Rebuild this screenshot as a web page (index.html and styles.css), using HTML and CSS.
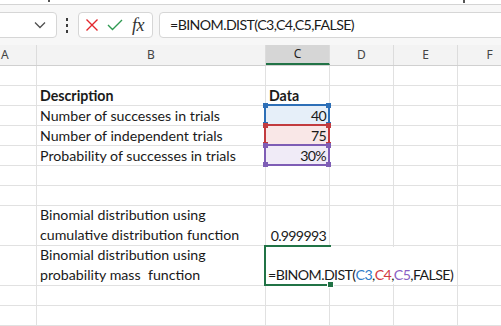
FILE: index.html
```html
<!DOCTYPE html>
<html lang="en">
<head>
    <meta charset="UTF-8">
    <title>BINOM.DIST</title>
    <link rel="stylesheet" href="styles.css">
</head>
<body>
    <div class="ribbon-edge">
        <span class="frag frag-left"></span>
        <span class="frag frag-right"></span>
    </div>

    <div class="formula-bar">
        <div class="name-box">
            <svg width="12" height="8" viewBox="0 0 12 8"><polyline points="1,1.5 6,6.5 11,1.5" fill="none" stroke="#505050" stroke-width="1.3"/></svg>
        </div>
        <div class="more-dots"><i></i><i></i><i></i></div>
        <div class="fx-buttons">
            <svg class="btn-cancel" width="14" height="14" viewBox="0 0 14 14"><path d="M1.5 1.5 L12.5 12.5 M12.5 1.5 L1.5 12.5" stroke="#e3262c" stroke-width="1.4" fill="none"/></svg>
            <svg class="btn-enter" width="16" height="12" viewBox="0 0 16 12"><polyline points="1,6 5.5,10.5 15,1" stroke="#2f9a52" stroke-width="1.4" fill="none"/></svg>
            <span class="fx">fx</span>
        </div>
        <div class="formula-input">=BINOM.DIST(C3,C4,C5,FALSE)</div>
    </div>

    <div class="sheet">
        <div class="col-headers">
            <div class="hdr col-a">A</div>
            <div class="hdr col-b">B</div>
            <div class="hdr col-c selected">C</div>
            <div class="hdr col-d">D</div>
            <div class="hdr col-e">E</div>
            <div class="hdr col-f">F</div>
        </div>

        <div class="grid">
            <div class="row">
                <div class="cell col-a"></div><div class="cell col-b"></div><div class="cell col-c"></div>
                <div class="cell col-d"></div><div class="cell col-e"></div><div class="cell col-f"></div>
            </div>
            <div class="row">
                <div class="cell col-a"></div><div class="cell col-b bold">Description</div><div class="cell col-c bold">Data</div>
                <div class="cell col-d"></div><div class="cell col-e"></div><div class="cell col-f"></div>
            </div>
            <div class="row">
                <div class="cell col-a"></div><div class="cell col-b">Number of successes in trials</div><div class="cell col-c num ref-blue">40</div>
                <div class="cell col-d"></div><div class="cell col-e"></div><div class="cell col-f"></div>
            </div>
            <div class="row">
                <div class="cell col-a"></div><div class="cell col-b">Number of independent trials</div><div class="cell col-c num ref-red">75</div>
                <div class="cell col-d"></div><div class="cell col-e"></div><div class="cell col-f"></div>
            </div>
            <div class="row">
                <div class="cell col-a"></div><div class="cell col-b">Probability of successes in trials</div><div class="cell col-c num ref-purple">30%</div>
                <div class="cell col-d"></div><div class="cell col-e"></div><div class="cell col-f"></div>
            </div>
            <div class="row">
                <div class="cell col-a"></div><div class="cell col-b"></div><div class="cell col-c"></div>
                <div class="cell col-d"></div><div class="cell col-e"></div><div class="cell col-f"></div>
            </div>
            <div class="row">
                <div class="cell col-a"></div><div class="cell col-b"></div><div class="cell col-c"></div>
                <div class="cell col-d"></div><div class="cell col-e"></div><div class="cell col-f"></div>
            </div>
            <div class="row tall">
                <div class="cell col-a"></div><div class="cell col-b wrap">Binomial distribution using<br>cumulative distribution function</div><div class="cell col-c num">0.999993</div>
                <div class="cell col-d"></div><div class="cell col-e"></div><div class="cell col-f"></div>
            </div>
            <div class="row tall">
                <div class="cell col-a"></div><div class="cell col-b wrap">Binomial distribution using<br>probability mass&nbsp; function</div><div class="cell col-c"></div>
                <div class="cell col-d"></div><div class="cell col-e"></div><div class="cell col-f"></div>
            </div>
            <div class="row">
                <div class="cell col-a"></div><div class="cell col-b"></div><div class="cell col-c"></div>
                <div class="cell col-d"></div><div class="cell col-e"></div><div class="cell col-f"></div>
            </div>
            <div class="row">
                <div class="cell col-a"></div><div class="cell col-b"></div><div class="cell col-c"></div>
                <div class="cell col-d"></div><div class="cell col-e"></div><div class="cell col-f"></div>
            </div>

            <!-- range highlights for the formula references -->
            <div class="range range-blue"><i class="h tl"></i><i class="h tr"></i><i class="h bl"></i><i class="h br"></i></div>
            <div class="range range-red"><i class="h tl"></i><i class="h tr"></i><i class="h bl"></i><i class="h br"></i></div>
            <div class="range range-purple"><i class="h tl"></i><i class="h tr"></i><i class="h bl"></i><i class="h br"></i></div>

            <!-- cell being edited -->
            <div class="editor">=BINOM.DIST(<span class="r-blue">C3</span>,<span class="r-red">C4</span>,<span class="r-purple">C5</span>,FALSE)</div>
            <div class="active-cell"><i class="fill-handle"></i></div>
        </div>
    </div>
</body>
</html>
```

FILE: styles.css
```css
body {
    margin: 0;
    width: 501px;
    height: 326px;
    overflow: hidden;
    background: #fff;
    font-family: Lato, "Liberation Sans", sans-serif;
    color: #1a1a1a;
}

.ribbon-edge {
    position: relative;
    height: 4px;
    border-bottom: 1px solid #d4d4d4;
    background: #fff;
}
.frag {
    position: absolute;
    top: 0;
    width: 2px;
    height: 2px;
    background: #555;
}
.frag-left { left: 48px; }
.frag-right { left: 463px; height: 3px; }

/* formula bar */
.formula-bar {
    display: flex;
    align-items: center;
    height: 40px;
    background: #f7f7f7;
    overflow: hidden;
}
.name-box {
    box-sizing: border-box;
    width: 64px;
    height: 26px;
    margin-left: -7px;
    background: #fff;
    border: 1px solid #d6d6d6;
    border-radius: 4px;
    display: flex;
    align-items: center;
    justify-content: flex-end;
    padding-right: 10px;
}
.more-dots {
    margin-left: 9px;
    display: flex;
    flex-direction: column;
    gap: 3px;
}
.more-dots i {
    display: block;
    width: 2px;
    height: 3px;
    background: #3c3c3c;
}
.fx-buttons {
    box-sizing: border-box;
    width: 75px;
    height: 26px;
    margin-left: 10px;
    background: #fff;
    border: 1px solid #d6d6d6;
    border-radius: 4px;
    display: flex;
    align-items: center;
    padding-left: 6px;
}
.btn-enter { margin-left: 8px; }
.fx {
    margin-left: 9px;
    font-family: "Liberation Serif", serif;
    font-style: italic;
    font-size: 18px;
    color: #333;
    letter-spacing: -0.5px;
}
.formula-input {
    box-sizing: border-box;
    flex: 1;
    height: 26px;
    margin-left: 6px;
    margin-right: -10px;
    background: #fff;
    border: 1px solid #d6d6d6;
    border-radius: 4px;
    padding-left: 10px;
    line-height: 24px;
    font-size: 14.2px;
    letter-spacing: -0.6px;
    color: #1a1a1a;
}

/* sheet */
.sheet {
    width: 522px;
}
.col-headers {
    display: flex;
    height: 21px;
    box-sizing: border-box;
    border-bottom: 1px solid #d0d0d0;
    background: #f3f3f3;
}
.hdr {
    box-sizing: border-box;
    border-right: 1px solid #dcdcdc;
    font-family: "Noto Sans", sans-serif;
    font-size: 12px;
    line-height: 20px;
    text-align: center;
    color: #444;
}
.hdr.col-a {
    text-align: left;
    padding-left: 1px;
}
.hdr.selected {
    background: #d6d6d6;
    border-bottom: 2px solid #217346;
    line-height: 18px;
    color: #222;
}

.col-a { width: 37px; }
.col-b { width: 229px; }
.col-c { width: 64px; }
.col-d { width: 64px; }
.col-e { width: 64px; }
.col-f { width: 64px; }

.grid {
    position: relative;
}
.row {
    display: flex;
    height: 20px;
}
.row.tall {
    height: 40px;
}
.cell {
    box-sizing: border-box;
    border-right: 1px solid #e1e1e1;
    border-bottom: 1px solid #e1e1e1;
    padding: 0 2px 0 3px;
    font-size: 14.2px;
    line-height: 19px;
    white-space: nowrap;
    display: flex;
    align-items: flex-end;
}
.cell.wrap {
    display: block;
    line-height: 20px;
    margin-top: -1px;
}
.cell.bold { font-weight: bold; }
.cell.num {
    justify-content: flex-end;
    letter-spacing: -0.7px;
    padding-right: 3px;
}

.ref-blue { background: #e6eff9; }
.ref-red { background: #f9e7e7; }
.ref-purple { background: #f0ebf7; }

.range {
    position: absolute;
    left: 264px;
    width: 66px;
    height: 22px;
    box-sizing: border-box;
    border: 2px solid;
}
.range-blue { top: 38px; border-color: #2d6fb7; color: #2d6fb7; }
.range-red { top: 58px; border-color: #c23b3f; color: #c23b3f; }
.range-purple { top: 78px; border-color: #7e5db5; color: #7e5db5; }
.h {
    position: absolute;
    width: 5px;
    height: 5px;
    background: currentColor;
}
.h.tl { left: -3px; top: -3px; }
.h.tr { right: -3px; top: -3px; }
.h.bl { left: -3px; bottom: -3px; }
.h.br { right: -3px; bottom: -3px; }

.editor {
    position: absolute;
    left: 266px;
    top: 181px;
    width: 190px;
    height: 37px;
    box-sizing: border-box;
    background: #fff;
    padding: 0 0 0 2px;
    font-size: 14.2px;
    letter-spacing: -0.6px;
    line-height: 19px;
    display: flex;
    align-items: flex-end;
    white-space: nowrap;
}
.r-blue { color: #2f7cc8; }
.r-red { color: #d2393f; }
.r-purple { color: #8a5fc4; }

.active-cell {
    position: absolute;
    left: 264px;
    top: 179px;
    width: 67px;
    height: 41px;
    box-sizing: border-box;
    border: 2px solid #217346;
    border-right: none;
}
.fill-handle {
    position: absolute;
    right: -3px;
    bottom: -4px;
    width: 5px;
    height: 5px;
    background: #217346;
    border: 1px solid #fff;
}
```
